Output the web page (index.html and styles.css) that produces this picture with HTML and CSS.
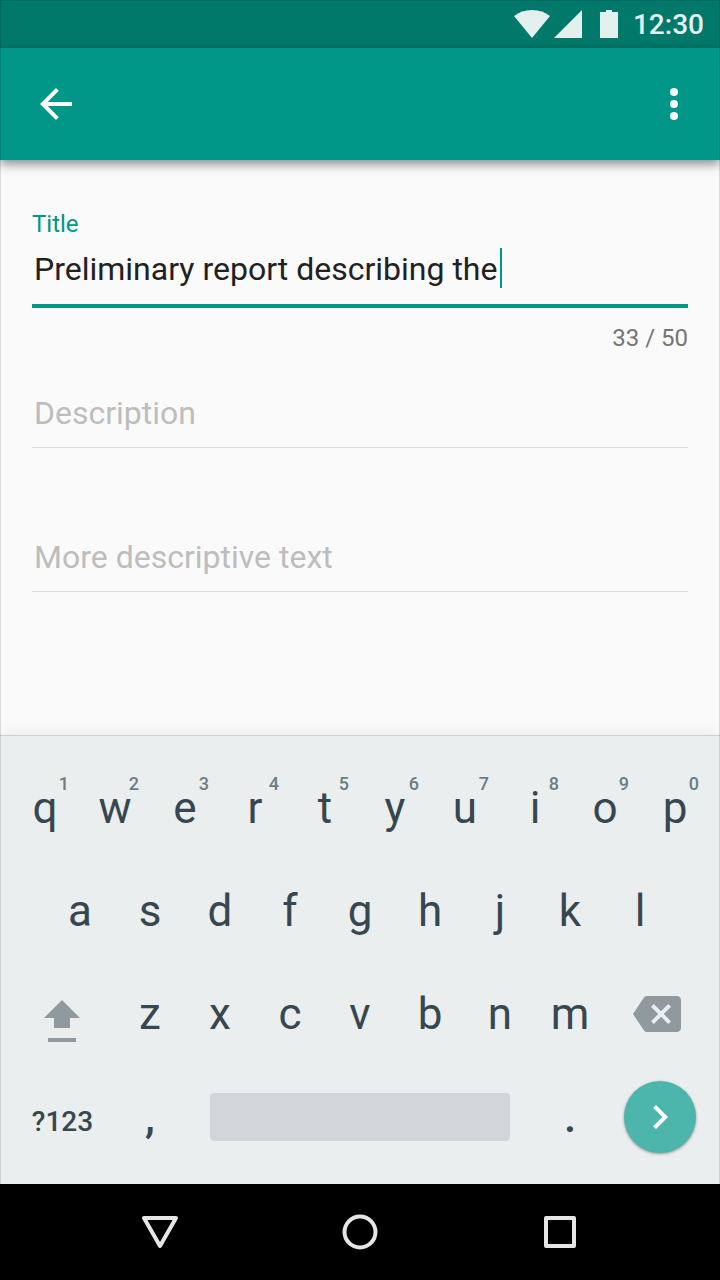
FILE: index.html
```html
<!DOCTYPE html>
<html lang="en">
<head>
    <meta charset="UTF-8">
    <meta name="viewport" content="width=device-width, initial-scale=1.0">
    <title>Report</title>
    <link rel="stylesheet" href="styles.css">
</head>
<body>
    <div class="statusbar">
        <svg class="wifi" width="36" height="28" viewBox="0 0 36 28"><path d="M18 28L0 6C5 2 11 0 18 0s13 2 18 6z"/></svg>
        <svg class="signal" width="28" height="28" viewBox="0 0 28 28"><path d="M28 0v28H0z"/></svg>
        <svg class="battery" width="18" height="28" viewBox="0 0 18 28"><path d="M6 0h6v2h6v26H0V2h6z"/></svg>
        <span class="time">12:30</span>
    </div>
    <header class="appbar">
        <button class="icon-btn" aria-label="Back">
            <svg width="48" height="48" viewBox="0 0 24 24"><path d="M20 11H7.83l5.59-5.59L12 4l-8 8 8 8 1.41-1.41L7.83 13H20v-2z"/></svg>
        </button>
        <button class="icon-btn" aria-label="More options">
            <svg width="48" height="48" viewBox="0 0 24 24"><circle cx="12" cy="6" r="2"/><circle cx="12" cy="12" r="2"/><circle cx="12" cy="18" r="2"/></svg>
        </button>
    </header>
    <form class="form">
        <div class="field">
            <label class="label" for="title">Title</label>
            <div class="line active">
                <input class="input" id="title" type="text" value="Preliminary report describing the" maxlength="50">
                <span class="caret"></span>
            </div>
            <div class="counter">33 / 50</div>
        </div>
        <div class="field">
            <div class="line">
                <input class="input" type="text" placeholder="Description" aria-label="Description">
            </div>
        </div>
        <div class="field">
            <div class="line">
                <input class="input" type="text" placeholder="More descriptive text" aria-label="More descriptive text">
            </div>
        </div>
    </form>
    <div class="keyboard">
        <div class="row">
            <button class="key">q<span class="alt">1</span></button>
            <button class="key">w<span class="alt">2</span></button>
            <button class="key">e<span class="alt">3</span></button>
            <button class="key">r<span class="alt">4</span></button>
            <button class="key">t<span class="alt">5</span></button>
            <button class="key">y<span class="alt">6</span></button>
            <button class="key">u<span class="alt">7</span></button>
            <button class="key">i<span class="alt">8</span></button>
            <button class="key">o<span class="alt">9</span></button>
            <button class="key">p<span class="alt">0</span></button>
        </div>
        <div class="row">
            <span class="half"></span>
            <button class="key">a</button>
            <button class="key">s</button>
            <button class="key">d</button>
            <button class="key">f</button>
            <button class="key">g</button>
            <button class="key">h</button>
            <button class="key">j</button>
            <button class="key">k</button>
            <button class="key">l</button>
            <span class="half"></span>
        </div>
        <div class="row">
            <button class="key wide shift" aria-label="Shift">
                <svg width="36" height="42" viewBox="0 0 36 42"><path d="M18 0l18 18h-10v10H10V18H0zM4 38h28v4H4z"/></svg>
            </button>
            <button class="key">z</button>
            <button class="key">x</button>
            <button class="key">c</button>
            <button class="key">v</button>
            <button class="key">b</button>
            <button class="key">n</button>
            <button class="key">m</button>
            <button class="key wide delete" aria-label="Delete">
                <svg width="48" height="48" viewBox="0 0 24 24"><path d="M22 3H7c-.69 0-1.23.35-1.59.88L0 12l5.41 8.11c.36.53.9.89 1.59.89h15c1.1 0 2-.9 2-2V5c0-1.1-.9-2-2-2zm-3 12.59L17.59 17 14 13.41 10.41 17 9 15.59 12.59 12 9 8.41 10.41 7 14 10.59 17.59 7 19 8.41 15.41 12 19 15.59z"/></svg>
            </button>
        </div>
        <div class="row">
            <button class="key wide mode">?123</button>
            <button class="key mark">,</button>
            <button class="key space" aria-label="Space"><span class="bar"></span></button>
            <button class="key mark">.</button>
            <button class="key wide next" aria-label="Next">
                <span class="disc"><svg width="48" height="48" viewBox="0 0 24 24"><path d="M10 6L8.59 7.41 13.17 12l-4.58 4.59L10 18l6-6z"/></svg></span>
            </button>
        </div>
    </div>
    <nav class="navbar">
        <button class="nav-btn" aria-label="Hide keyboard">
            <svg width="36" height="36" viewBox="0 0 36 36"><path d="M2 4h32L18 32z"/></svg>
        </button>
        <button class="nav-btn" aria-label="Home">
            <svg width="36" height="36" viewBox="0 0 36 36"><circle cx="18" cy="18" r="15.5"/></svg>
        </button>
        <button class="nav-btn" aria-label="Recent apps">
            <svg width="36" height="36" viewBox="0 0 36 36"><rect x="4" y="4" width="28" height="28"/></svg>
        </button>
    </nav>
</body>
</html>
```
FILE: styles.css
```css
*{
    box-sizing: border-box;
    padding: 0;
    margin: 0;
}
body{
    position: relative;
    display: flex;
    flex-direction: column;
    min-height: 100vh;
    background-color: #fafafa;
    font-family: Roboto, sans-serif;
}
/* thin frame round the whole screen */
body::after{
    content: "";
    position: absolute;
    inset: 0;
    border: 1px solid rgba(0, 0, 0, 0.12);
    pointer-events: none;
    z-index: 3;
}
button{
    border: none;
    background: none;
    font-family: inherit;
    color: inherit;
    cursor: pointer;
}
svg{
    display: block;
    fill: currentColor;
}

.statusbar{
    display: flex;
    align-items: center;
    justify-content: flex-end;
    height: 48px;
    padding-right: 16px;
    background-color: #00796b;
    color: #e3f0ee;
}
.signal{
    margin-left: 4px;
}
.battery{
    margin: 0 15px 0 18px;
}
.time{
    padding-top: 2px;
    font-size: 28px;
    font-weight: 500;
    line-height: 32px;
}

.appbar{
    display: flex;
    align-items: center;
    justify-content: space-between;
    height: 112px;
    padding: 0 22px 0 32px;
    background-color: #009688;
    color: white;
    box-shadow: 0 4px 10px rgba(0, 0, 0, 0.45);
    z-index: 1;
}

.form{
    flex: 1;
    display: flex;
    flex-direction: column;
    gap: 40px;
    padding: 48px 32px;
}
.field{
    min-height: 104px;
}
.label{
    display: block;
    margin-bottom: 8px;
    font-size: 24px;
    line-height: 32px;
    color: #009688;
}
.line{
    display: flex;
    height: 56px;
    border-bottom: 1px solid #dadada;
}
.line.active{
    height: 60px;
    border-bottom: 4px solid #009688;
}
.input{
    flex: 1;
    height: 40px;
    padding: 2px 0 0 2px;
    border: none;
    outline: none;
    background: none;
    font-family: inherit;
    font-size: 32px;
    color: #212121;
}
.active .input{
    flex: none;
    field-sizing: content;
    max-width: 98%;
}
.input::placeholder{
    color: #bdbdbd;
}
.caret{
    width: 2px;
    height: 40px;
    margin-left: 3px;
    background-color: #009688;
}
.counter{
    margin-top: 16px;
    font-size: 24px;
    line-height: 28px;
    text-align: right;
    color: #757575;
}

.keyboard{
    padding: 20px 10px 16px;
    border-top: 1px solid #cdd0d0;
    background-color: #eaeeef;
    color: #37474f;
    box-shadow: 0 0 16px rgba(0, 0, 0, 0.08);
}
.row{
    display: flex;
    height: 103px;
}
.key{
    position: relative;
    display: flex;
    align-items: center;
    justify-content: center;
    flex: 2 1 0;
    min-width: 0;
    font-size: 44px;
    line-height: 52px;
}
.half{
    flex: 1 1 0;
}
.wide{
    flex-grow: 3;
    color: #90999e;
}
.alt{
    position: absolute;
    top: 17px;
    right: 11px;
    font-size: 18px;
    font-weight: 500;
    line-height: 21px;
    color: #6a7d85;
}
.shift{
    padding-top: 14px;
}
.shift svg, .delete svg{
    margin-right: 2px;
}
.mode{
    padding-top: 10px;
    font-size: 28px;
    font-weight: 500;
    color: #37474f;
}
.mark{
    font-weight: 500;
}
.space{
    flex-grow: 10;
}
.bar{
    flex: 1;
    height: 48px;
    margin: 0 25px;
    border-radius: 4px;
    background-color: #d1d6d9;
}
.next{
    color: white;
}
.disc{
    display: flex;
    align-items: center;
    justify-content: center;
    width: 72px;
    height: 72px;
    margin-left: 4px;
    border-radius: 50%;
    background-color: #4db6ac;
    box-shadow: 0 1px 3px rgba(0, 0, 0, 0.4);
}

.navbar{
    display: flex;
    height: 96px;
    padding: 0 60px;
    background-color: black;
    color: #e6e6e6;
}
.nav-btn{
    flex: 1;
    display: flex;
    align-items: center;
    justify-content: center;
}
.nav-btn svg{
    fill: none;
    stroke: currentColor;
    stroke-width: 4;
    stroke-linejoin: round;
}
```
